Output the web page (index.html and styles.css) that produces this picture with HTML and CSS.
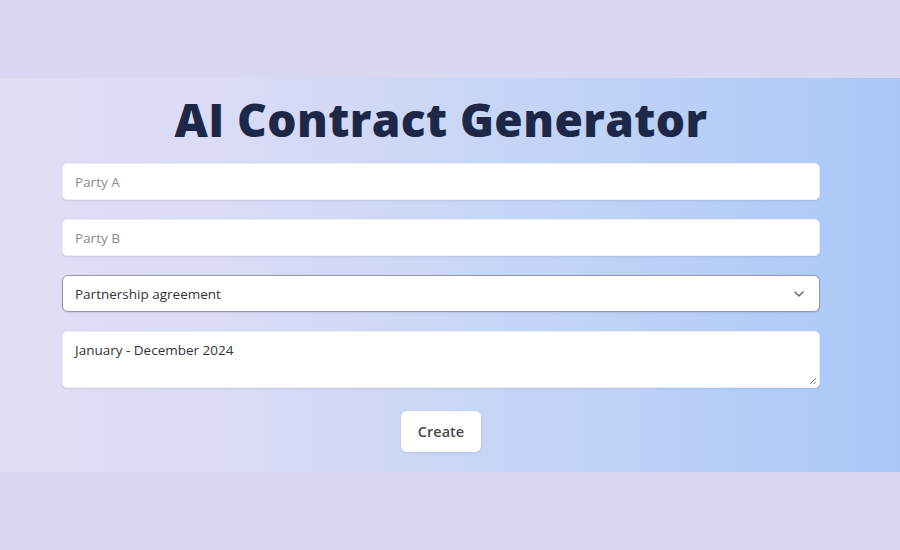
FILE: index.html
```html
<!DOCTYPE html>
<html>
<head>
<meta charset="utf-8">
<link rel="stylesheet" href="styles.css">
</head>
<body>
<div class="page">
  <section class="band">
    <div class="form">
      <h1 class="title">AI Contract Generator</h1>
      <input class="field" type="text" placeholder="Party A">
      <input class="field" type="text" placeholder="Party B">
      <div class="select">
        <span>Partnership agreement</span>
        <svg class="chev" width="10" height="6" viewBox="0 0 10 6"><path d="M1 1 L5 5 L9 1" fill="none" stroke="#6f6f6f" stroke-width="1.6" stroke-linecap="round" stroke-linejoin="round"/></svg>
      </div>
      <div class="area">
        <span>January - December 2024</span>
        <svg class="grip" width="8" height="8" viewBox="0 0 8 8"><path d="M7 1 L1 7 M7 4.5 L4.5 7" stroke="#777" stroke-width="1"/></svg>
      </div>
      <div class="actions"><button class="btn">Create</button></div>
    </div>
  </section>
</div>
</body>
</html>
```
FILE: styles.css
```css
html, body { margin: 0; padding: 0; }
body {
  width: 900px;
  height: 550px;
  background: #d8d8f3;
  font-family: "Open Sans", "Noto Sans", sans-serif;
  overflow: hidden;
}
.page { padding-top: 78px; }
.band {
  height: 394px;
  box-sizing: border-box;
  padding-left: 62px;
  background: linear-gradient(90deg, #e2def4 0%, #dbdbf6 25%, #cad7f6 50%, #bbd0f6 75%, #a8c8f7 100%);
}
.form {
  width: 758px;
  display: flex;
  flex-direction: column;
}
.title {
  margin: 0;
  padding-top: 10px;
  height: 85px;
  box-sizing: border-box;
  text-align: center;
  font-family: "Open Sans", sans-serif;
  font-weight: 800;
  font-size: 46px;
  line-height: 62px;
  color: #1d2849;
  letter-spacing: 0.4px;
}
.field, .select, .area {
  box-sizing: border-box;
  width: 758px;
  background: #fff;
  border: 1px solid #eceef4;
  border-radius: 5px;
  box-shadow: 0 1px 2px rgba(60, 70, 110, 0.12);
  font-family: "Open Sans", sans-serif;
  font-size: 13.5px;
  color: #333;
  padding: 0 12px;
}
.field {
  height: 37px;
  margin-bottom: 19px;
  outline: none;
}
.field::placeholder { color: #8a8a8a; }
.select {
  height: 37px;
  margin-bottom: 19px;
  display: flex;
  align-items: center;
  justify-content: space-between;
  border: 1px solid #9498a6;
  border-radius: 6px;
  padding-right: 15px;
}
.area {
  height: 57px;
  position: relative;
  padding-top: 8px;
  line-height: 20px;
}
.grip { position: absolute; right: 2px; bottom: 2px; }
.actions {
  display: flex;
  justify-content: center;
  padding-top: 23px;
}
.btn {
  width: 80px;
  height: 41px;
  background: #fff;
  border: none;
  border-radius: 6px;
  box-shadow: 0 1px 3px rgba(60, 70, 110, 0.15);
  font-family: "Open Sans", sans-serif;
  font-weight: 600;
  font-size: 14.5px;
  color: #4a4a4a;
}
```
